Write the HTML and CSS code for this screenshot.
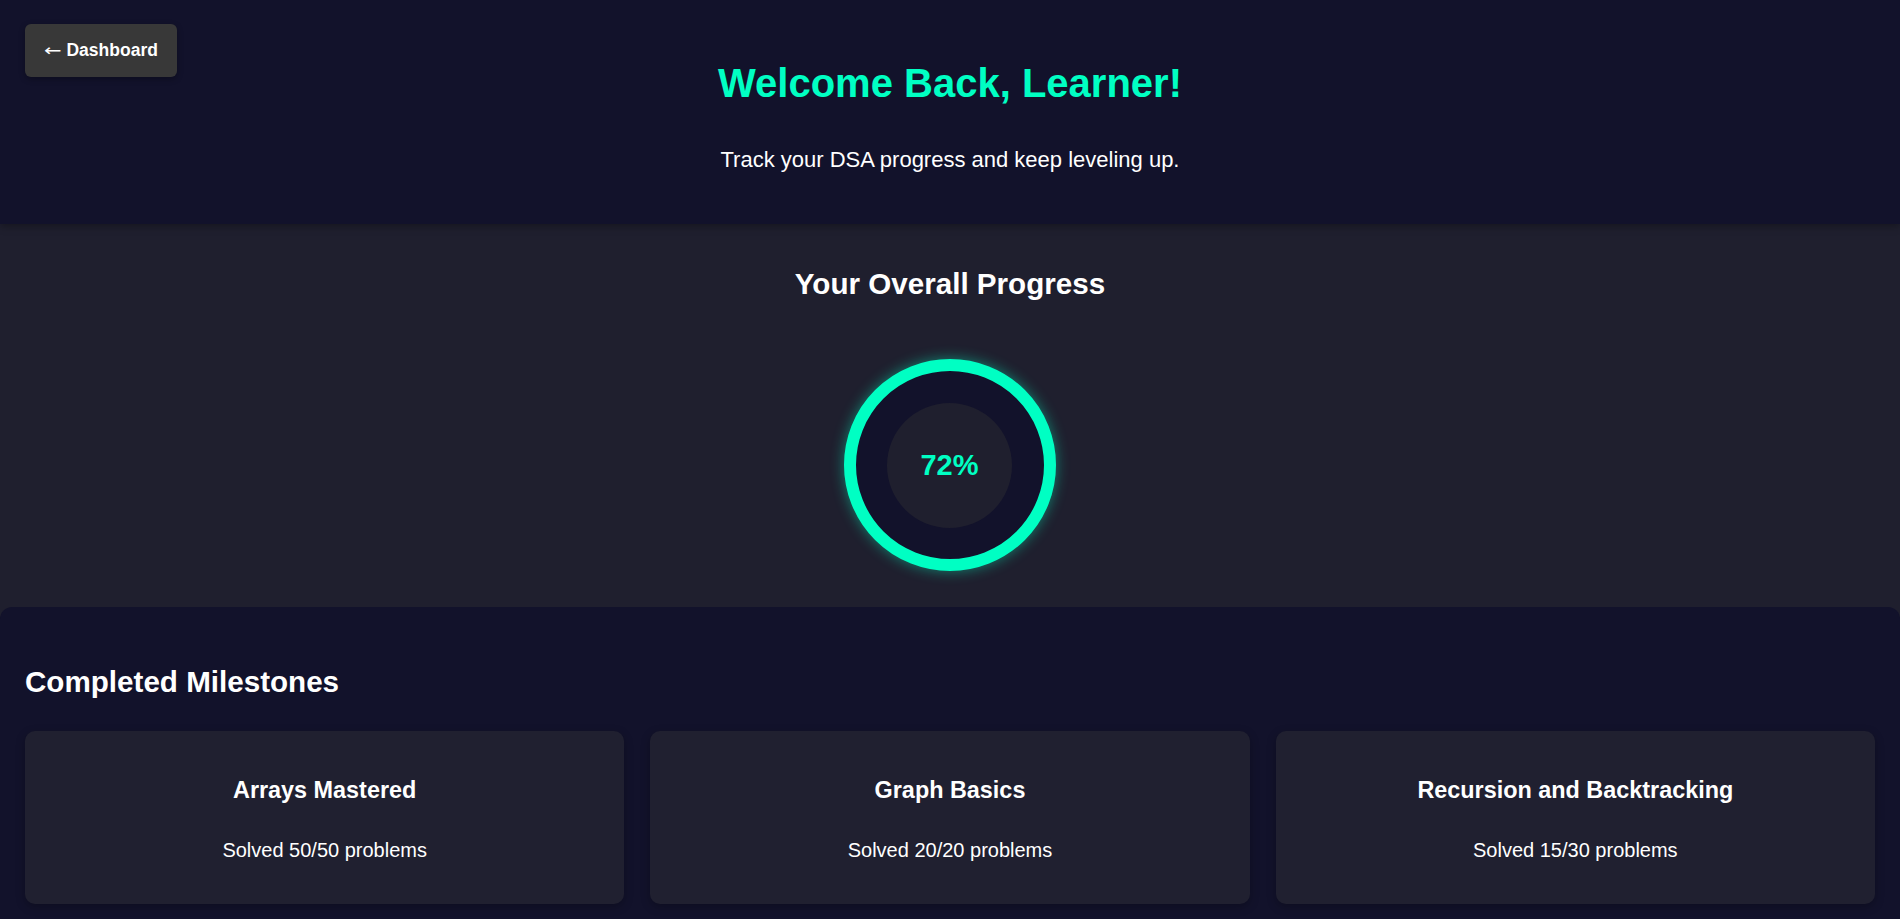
FILE: index.html
```html
<!DOCTYPE html>
<html lang="en">
<head>
<meta charset="utf-8">
<title>DSA Progress</title>
<link rel="stylesheet" href="styles.css">
</head>
<body>
  <header class="hero">
    <a class="back-btn" href="#"><span class="arrow">←</span> Dashboard</a>
    <h1 class="hero-title">Welcome Back, Learner!</h1>
    <p class="hero-sub">Track your DSA progress and keep leveling up.</p>
  </header>

  <section class="progress">
    <h2 class="section-title">Your Overall Progress</h2>
    <div class="ring">
      <div class="ring-inner">72%</div>
    </div>
  </section>

  <section class="milestones">
    <h2 class="section-title left">Completed Milestones</h2>
    <div class="cards">
      <div class="card">
        <h3 class="card-title">Arrays Mastered</h3>
        <p class="card-text">Solved 50/50 problems</p>
      </div>
      <div class="card">
        <h3 class="card-title">Graph Basics</h3>
        <p class="card-text">Solved 20/20 problems</p>
      </div>
      <div class="card">
        <h3 class="card-title">Recursion and Backtracking</h3>
        <p class="card-text">Solved 15/30 problems</p>
      </div>
    </div>
  </section>
</body>
</html>
```

FILE: styles.css
```css
* { box-sizing: border-box; }

html, body {
  margin: 0;
  padding: 0;
}

body {
  font-family: "Liberation Sans", Arial, sans-serif;
  background: #1f1f2e;
  color: #ffffff;
  font-size: 20px;
}

.hero {
  position: relative;
  z-index: 2;
  background: #12122b;
  display: grid;
  grid-template-columns: 1fr auto 1fr;
  padding: 24px 25px 52px;
  box-shadow: 0 2px 8px rgba(0, 0, 0, 0.35);
}

.back-btn {
  grid-column: 1;
  grid-row: 1;
  justify-self: start;
  align-self: start;
  background: #383838;
  color: #ffffff;
  text-decoration: none;
  font-weight: bold;
  font-size: 17.5px;
  line-height: 21px;
  padding: 16px 19px;
  border-radius: 6px;
  box-shadow: 0 2px 6px rgba(0, 0, 0, 0.3);
  white-space: nowrap;
}

.arrow {
  font-family: "DejaVu Sans", sans-serif;
  font-weight: normal;
  font-size: 21px;
  line-height: 21px;
  display: inline-block;
  vertical-align: top;
  transform: scaleY(0.8);
}

.hero-title {
  grid-column: 2;
  grid-row: 1;
  margin: 36px 0 0;
  font-size: 40px;
  line-height: 46px;
  font-weight: bold;
  color: #00ffc3;
  text-align: center;
}

.hero-sub {
  grid-column: 1 / -1;
  grid-row: 2;
  margin: 41px 0 0;
  font-size: 22px;
  line-height: 25px;
  text-align: center;
  color: #ffffff;
}

.progress {
  background: #1f1f2e;
  padding: 43px 0 36px;
  display: flex;
  flex-direction: column;
  align-items: center;
}

.section-title {
  margin: 0;
  font-size: 29.6px;
  line-height: 34px;
  font-weight: bold;
  color: #ffffff;
}

.progress .section-title {
  text-align: center;
}

.ring {
  margin-top: 58px;
  width: 212px;
  height: 212px;
  border-radius: 50%;
  border: 12px solid #00ffc3;
  background: #12122b;
  box-shadow: 0 0 14px rgba(0, 255, 195, 0.45);
  display: flex;
  align-items: center;
  justify-content: center;
}

.ring-inner {
  width: 125px;
  height: 125px;
  border-radius: 50%;
  background: #1f1f2e;
  display: flex;
  align-items: center;
  justify-content: center;
  color: #00ffc3;
  font-weight: bold;
  font-size: 29px;
  margin-left: -1px;
}

.milestones {
  background: #12122b;
  border-radius: 12px 12px 0 0;
  padding: 58px 25px 40px;
}

.section-title.left {
  text-align: left;
}

.cards {
  margin-top: 32px;
  display: grid;
  grid-template-columns: repeat(3, 1fr);
  gap: 26px;
}

.card {
  background: #202030;
  border-radius: 10px;
  padding: 46px 20px 42px;
  text-align: center;
  box-shadow: 0 3px 10px rgba(0, 0, 0, 0.25);
}

.card-title {
  margin: 0;
  font-size: 23.4px;
  line-height: 27px;
  font-weight: bold;
}

.card-text {
  margin: 35px 0 0;
  font-size: 20px;
  line-height: 23px;
}
```
